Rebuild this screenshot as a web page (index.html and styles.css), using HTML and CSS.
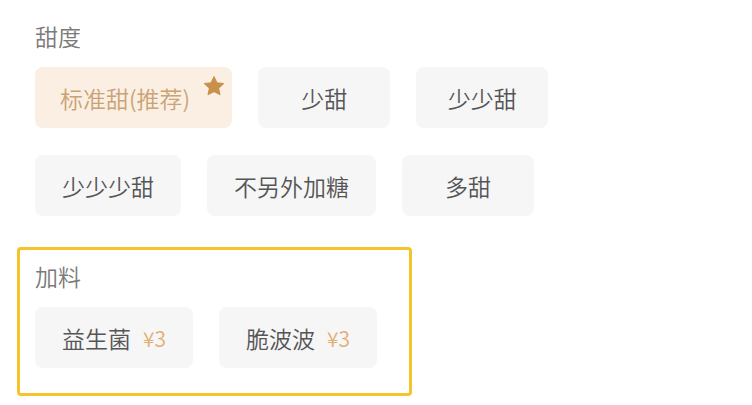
FILE: index.html
```html
<!DOCTYPE html>
<html lang="zh-CN">
<head>
    <meta charset="UTF-8">
    <meta name="viewport" content="width=device-width, initial-scale=1.0">
    <title>甜度 / 加料</title>
    <link rel="stylesheet" href="styles.css">
</head>
<body>
    <div class="page">
        <div class="group">
            <div class="group-title">甜度</div>
            <div class="options">
                <div class="option option-rec">
                    标准甜(推荐)
                    <svg class="star" viewBox="0 0 24 24" width="22" height="22">
                        <path d="M12 1.8l3.1 6.6 7.2.9-5.3 5 1.4 7.1L12 17.9l-6.4 3.5 1.4-7.1-5.3-5 7.2-.9z" fill="#c8914a" stroke="#c8914a" stroke-width="1.2" stroke-linejoin="round"/>
                    </svg>
                </div>
                <div class="option">少甜</div>
                <div class="option">少少甜</div>
                <div class="option">少少少甜</div>
                <div class="option">不另外加糖</div>
                <div class="option">多甜</div>
            </div>
        </div>
        <div class="group group-boxed">
            <div class="group-title">加料</div>
            <div class="options">
                <div class="option">益生菌<span class="price">¥3</span></div>
                <div class="option">脆波波<span class="price">¥3</span></div>
            </div>
        </div>
    </div>
</body>
</html>
```

FILE: styles.css
```css
body, html {
    margin: 0;
    padding: 0;
    background-color: #ffffff;
    font-family: "Noto Sans CJK SC", "Noto Sans", sans-serif;
}
.page {
    padding: 20px 17px;
}
.group {
    padding: 0 18px;
}
.group-title {
    font-size: 23px;
    font-weight: 350;
    line-height: 32px;
    color: #7a7a7a;
}
.options {
    display: flex;
    flex-wrap: wrap;
    gap: 27px 26px;
    margin-top: 15px;
    width: 520px;
}
.option {
    position: relative;
    display: flex;
    align-items: center;
    justify-content: center;
    box-sizing: border-box;
    height: 61px;
    min-width: 132px;
    padding: 0 27px;
    border-radius: 8px;
    background-color: #f6f6f7;
    color: #555555;
    font-size: 23px;
    font-weight: 350;
}
.option-rec {
    padding: 0 42px 0 25px;
    background-color: #fbefe3;
    color: #c9a375;
}
.star {
    position: absolute;
    top: 8px;
    right: 7px;
}
.price {
    margin-left: 12px;
    font-size: 21px;
    color: #e2ae72;
}
.group-boxed {
    width: fit-content;
    margin-top: 31px;
    padding: 10px 32px 25px 15px;
    border: 3px solid #f5c32c;
    border-radius: 4px;
}
.group-boxed .options {
    width: auto;
}
```
